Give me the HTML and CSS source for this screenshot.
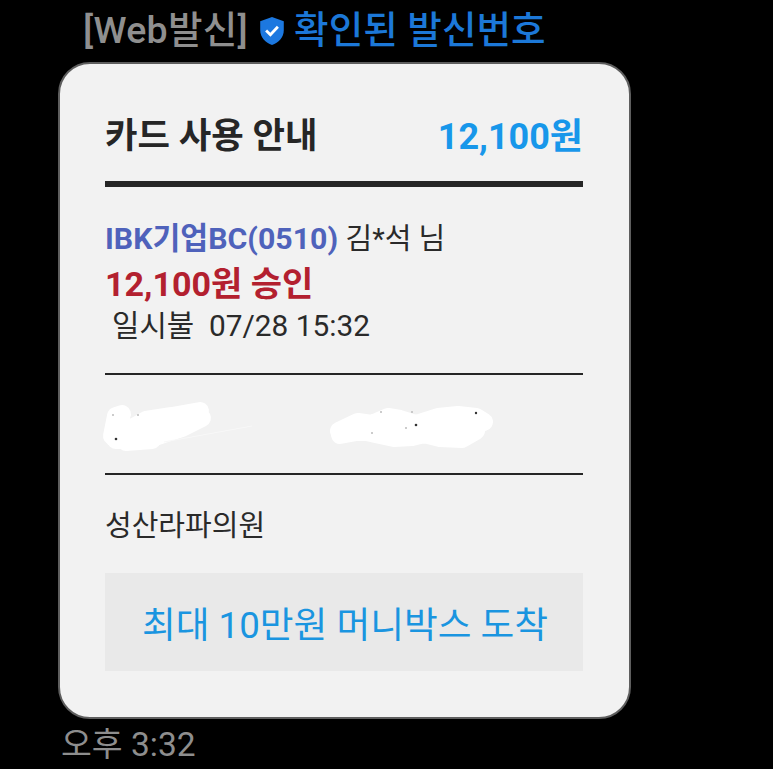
FILE: index.html
```html
<!DOCTYPE html>
<html lang="ko">
<head>
<meta charset="utf-8">
<title>카드 사용 안내</title>
<link rel="stylesheet" href="styles.css">
</head>
<body>
<main class="message">
  <div class="sender">
    <span class="sender-web">[Web발신]</span>
    <svg class="shield" viewBox="0 0 24 28" aria-hidden="true">
      <path class="shield-body" d="M12 1 L23 5 V13 C23 20 18 25 12 27 C6 25 1 20 1 13 V5 Z"/>
      <path class="shield-check" d="M6.5 13.5 L10.5 17.5 L17.5 10"/>
    </svg>
    <span class="sender-verified">확인된 발신번호</span>
  </div>
  <section class="card">
    <header class="card-head">
      <h1 class="card-title">카드 사용 안내</h1>
      <span class="card-amount">12,100원</span>
    </header>
    <div class="details">
      <p class="detail-line"><span class="card-name">IBK기업BC(0510)</span> <span class="card-owner">김*석 님</span></p>
      <p class="approved">12,100원 승인</p>
      <p class="detail-line indent">일시불&nbsp; 07/28 15:32</p>
    </div>
    <div class="redacted">
      <svg class="blob-a" viewBox="0 0 110 48" aria-hidden="true">
        <path class="blob-fill" d="M10 32 L14 12 L20 10 M12 34 L44 16 L70 12 L98 7 M14 36 L50 34 L80 24 L100 14 M24 38 L50 36 M16 24 L60 22 L84 16"/>
        <path class="blob-trail" d="M62 38 L150 22"/>
        <circle class="speck" cx="11" cy="11" r="1"/>
        <circle class="speck" cx="36" cy="11" r="1"/>
        <circle class="speck dark" cx="14" cy="35" r="1.3"/>
      </svg>
      <svg class="blob-b" viewBox="0 0 168 48" aria-hidden="true">
        <path class="blob-fill" d="M11 27 L30 18 L44 20 L60 13 L72 15 L88 20 L110 13 L130 11 L148 13 L156 18 M12 31 L34 27 L52 31 L66 34 L84 33 L96 30 L112 34 L134 35 L148 27 M30 24 L70 24 L110 24 L140 22"/>
        <circle class="speck" cx="44" cy="29" r="1"/>
        <circle class="speck" cx="53" cy="8" r="1"/>
        <circle class="speck" cx="84" cy="8" r="1"/>
        <circle class="speck dark" cx="88" cy="21" r="1.3"/>
        <circle class="speck" cx="78" cy="24" r="1"/>
        <circle class="speck dark" cx="148" cy="9" r="1.2"/>
      </svg>
    </div>
    <p class="merchant">성산라파의원</p>
    <div class="action">최대 10만원 머니박스 도착</div>
  </section>
  <time class="timestamp">오후 3:32</time>
</main>
</body>
</html>
```

FILE: styles.css
```css
* { box-sizing: border-box; }
html, body { margin: 0; height: 100%; background: #000; overflow: hidden; }
body { font-family: Roboto, "Noto Sans CJK KR", sans-serif; }
p, h1 { margin: 0; }

.message { width: 631px; padding-left: 58px; display: flex; flex-direction: column; }

.sender { height: 62px; padding-left: 25px; display: flex; align-items: center; font-size: 37.5px; line-height: 1; }
.sender-web { color: #8f8f8f; font-weight: 500; letter-spacing: .3px; }
.sender-verified { color: #1c78d8; font-weight: 500; letter-spacing: .1px; }
.shield { width: 26px; height: 30px; margin: 0 9px 0 11px; flex: none; }
.shield-body { fill: #1c78e0; }
.shield-check { fill: none; stroke: #fff; stroke-width: 2.6; }

.card {
  width: 573px; height: 657px; padding: 0 46px 0 45px;
  background: #f2f2f2; border: 2px solid #5e5e5e; border-radius: 32px;
  color: #2a2a2a;
}
.card-head {
  height: 123px; padding-top: 20px;
  display: flex; justify-content: space-between; align-items: center;
  border-bottom: 6px solid #262626;
}
.card-title { font-size: 35.3px; font-weight: 700; color: #262626; }
.card-amount { font-size: 36px; font-weight: 700; color: #1897ea; }

.details { height: 188px; padding-top: 29px; border-bottom: 2px solid #262626; }
.detail-line { font-size: 29.8px; line-height: 45px; white-space: nowrap; }
.card-name { color: #4f62bb; font-weight: 700; font-size: 30.3px; }
.card-owner { font-size: 29px; }
.approved { font-size: 34px; line-height: 45px; font-weight: 700; color: #b3202f; }
.indent { padding-left: 7px; line-height: 37px; }

.redacted { height: 100px; padding-top: 29px; display: flex; align-items: flex-start; gap: 116px; border-bottom: 2px solid #262626; }
.blob-a { width: 110px; height: 48px; flex: none; margin-left: -3px; overflow: visible; }
.blob-b { width: 168px; height: 48px; flex: none; }
.blob-fill { fill: none; stroke: #fff; stroke-width: 18; stroke-linecap: round; stroke-linejoin: round; }
.blob-trail { fill: none; stroke: #f8f8f8; stroke-width: 1; }
.speck { fill: #bbb; }
.speck.dark { fill: #333; }

.merchant { font-size: 29px; line-height: 40px; margin-top: 31px; }

.action {
  height: 98px; margin-top: 27px; padding-left: 2px;
  display: flex; align-items: center; justify-content: center;
  background: #e9e9e9; color: #1a95e0; font-size: 36.7px;
}

.timestamp { padding: 6px 0 0 3px; font-size: 33.5px; line-height: 40px; color: #8e8e8e; }
```
